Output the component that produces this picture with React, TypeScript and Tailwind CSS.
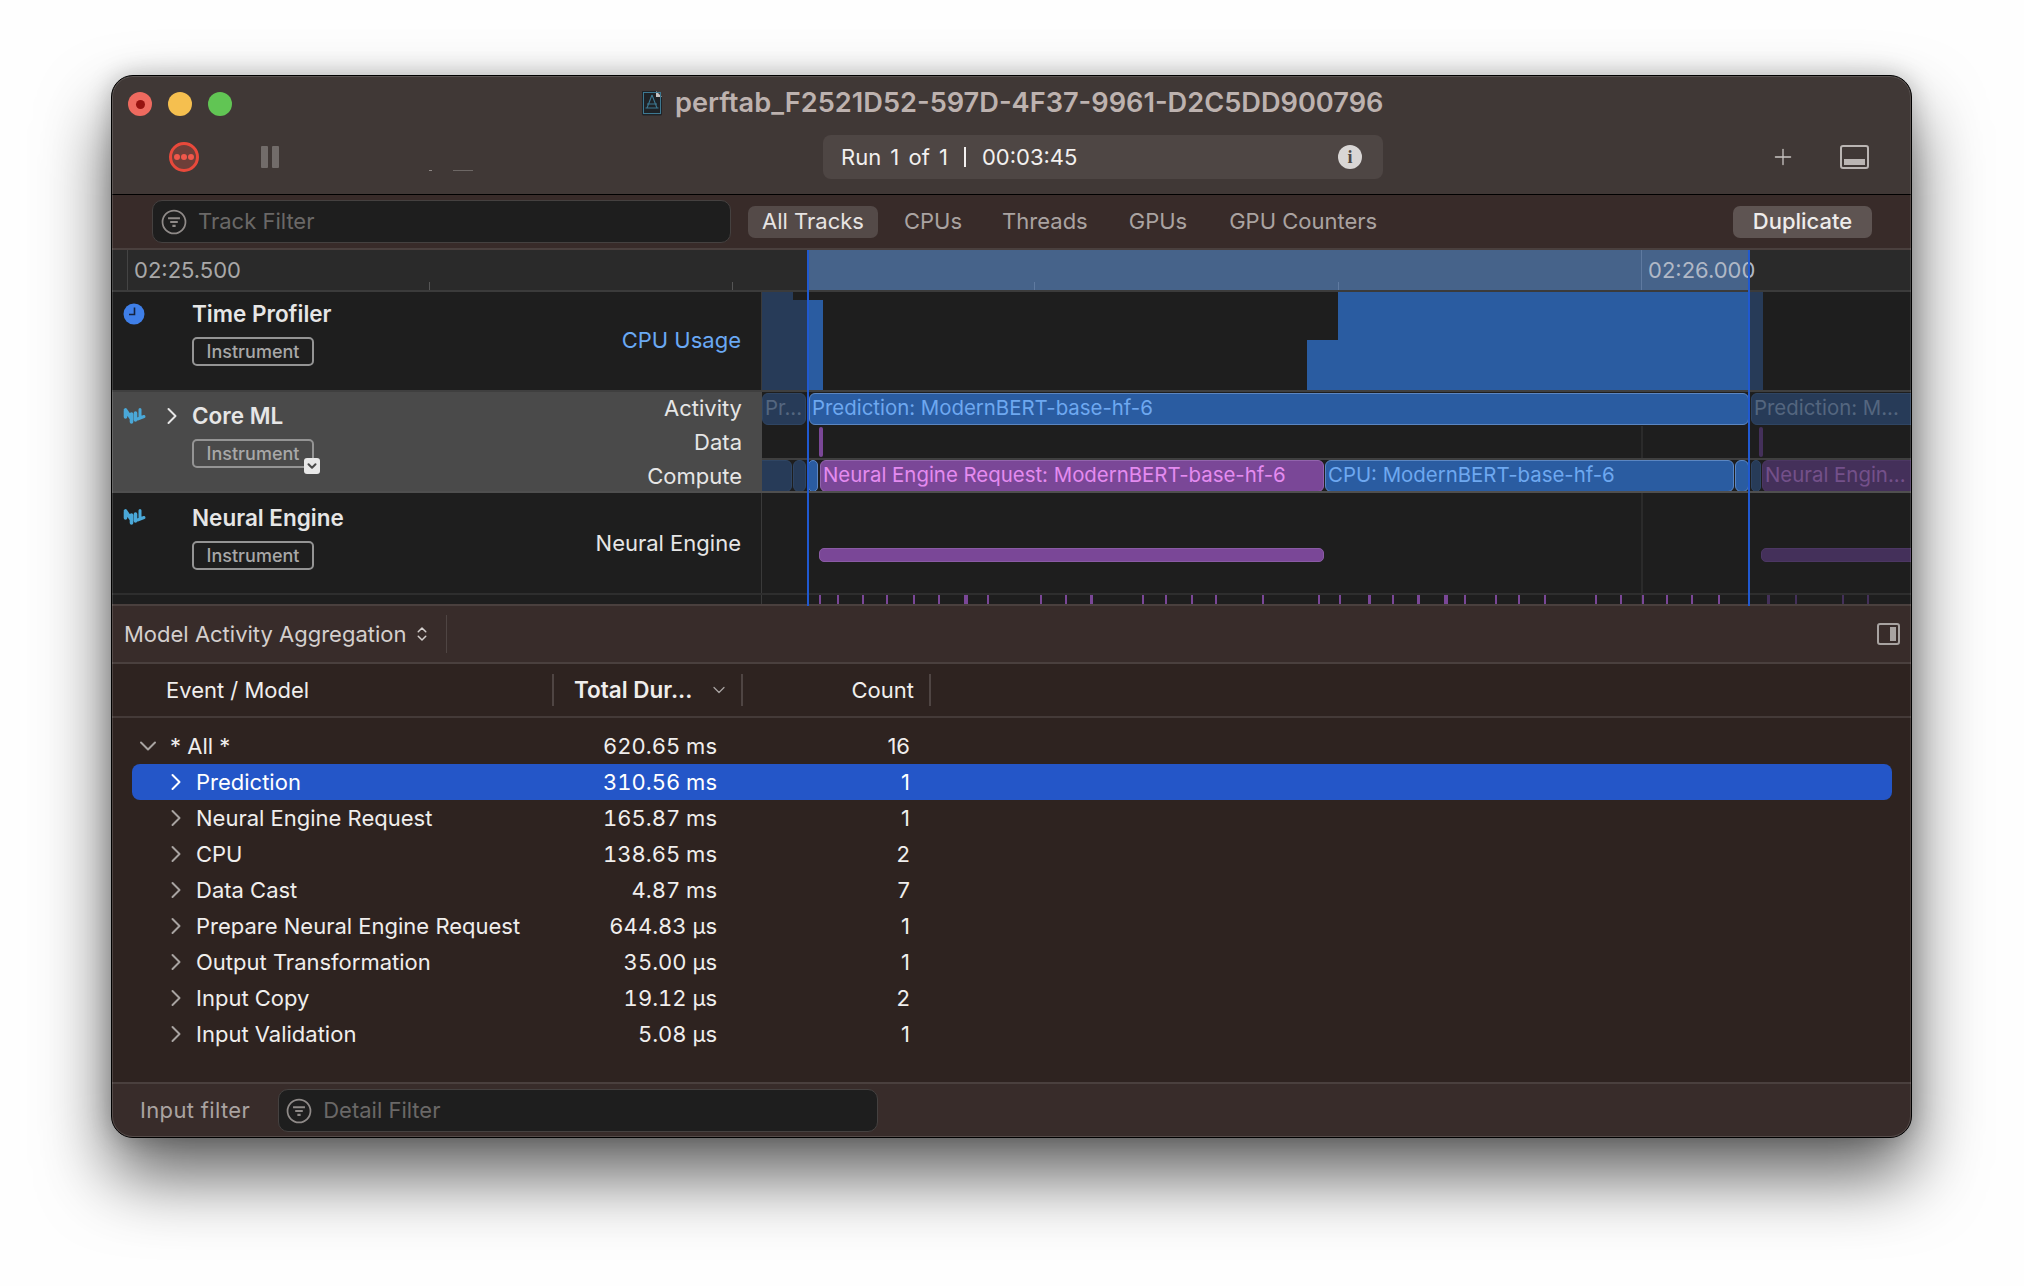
import { ChevronDown, ChevronsUpDown, Plus } from 'lucide-react'

const canvasLeft = 762

type Bar = { x1: number; x2: number; label?: string; tone: 'blue' | 'blueDim' | 'purple' | 'purpleDim' }

const toneClass = {
  blue: 'bg-[#2a5ca1] border-[#5b86c2] text-[#6ea8f0]',
  blueDim: 'bg-[#273b58] border-[#2f4563] text-[#54667f]',
  purple: 'bg-[#7a4797] border-[#9263ad] text-[#e48bf0]',
  purpleDim: 'bg-[#44305a] border-[#4c3763] text-[#74508a]',
}

const activityBars: Bar[] = [
  { x1: 762, x2: 806, label: 'Pr...', tone: 'blueDim' },
  { x1: 809, x2: 1749, label: 'Prediction: ModernBERT-base-hf-6', tone: 'blue' },
  { x1: 1751, x2: 1925, label: 'Prediction: M...', tone: 'blueDim' },
]

const computeBars: Bar[] = [
  { x1: 750, x2: 792, tone: 'blueDim' },
  { x1: 793, x2: 806, tone: 'blueDim' },
  { x1: 808, x2: 818, tone: 'blue' },
  { x1: 820, x2: 1324, label: 'Neural Engine Request: ModernBERT-base-hf-6', tone: 'purple' },
  { x1: 1325, x2: 1734, label: 'CPU: ModernBERT-base-hf-6', tone: 'blue' },
  { x1: 1735, x2: 1749, tone: 'blue' },
  { x1: 1751, x2: 1761, tone: 'blueDim' },
  { x1: 1762, x2: 1925, label: 'Neural Engin...', tone: 'purpleDim' },
]

// [x, width] of the small marks under the Neural Engine track
const ticks: [number, number][] = [
  [819, 2], [837, 2], [862, 2], [886, 2], [913, 2], [938, 2], [964, 4], [987, 2], [1040, 2], [1065, 2], [1090, 3],
  [1142, 2], [1165, 2], [1191, 2], [1215, 2], [1262, 2], [1318, 2], [1339, 2], [1368, 3], [1392, 2], [1417, 3],
  [1444, 4], [1464, 2], [1495, 2], [1518, 2], [1544, 2], [1595, 2], [1620, 2], [1642, 2], [1666, 2], [1691, 2], [1718, 2],
]
const dimTicks: [number, number][] = [[1767, 3], [1795, 2], [1842, 2], [1867, 2]]

const rows = [
  { name: 'Prediction', dur: '310.56 ms', count: '1', selected: true },
  { name: 'Neural Engine Request', dur: '165.87 ms', count: '1' },
  { name: 'CPU', dur: '138.65 ms', count: '2' },
  { name: 'Data Cast', dur: '4.87 ms', count: '7' },
  { name: 'Prepare Neural Engine Request', dur: '644.83 µs', count: '1' },
  { name: 'Output Transformation', dur: '35.00 µs', count: '1' },
  { name: 'Input Copy', dur: '19.12 µs', count: '2' },
  { name: 'Input Validation', dur: '5.08 µs', count: '1' },
]

function FilterIcon({ size = 24 }: { size?: number }) {
  return (
    <svg width={size} height={size} viewBox="0 0 24 24" fill="none" stroke="#8f8a88" strokeWidth="1.6" className="shrink-0">
      <circle cx="12" cy="12" r="10.6" />
      <path d="M6.5 8.5h11M8.5 12h7M10.5 15.5h3" strokeWidth="2" />
    </svg>
  )
}

function MlIcon() {
  return (
    <svg width="23" height="18" viewBox="0 0 23 18" fill="none" stroke="#4aa8d8" strokeWidth="3.6" strokeLinecap="round" strokeLinejoin="round">
      <path d="M2.5 3v7M2.5 3l5.5 8M8.5 7v8M12.5 6v7" />
      <path d="M17 2.5v8M14.5 12l6.5-2.5" strokeWidth="3" />
    </svg>
  )
}

function ClockIcon() {
  return (
    <svg width="22" height="22" viewBox="0 0 22 22">
      <circle cx="11" cy="11" r="10.5" fill="#3f7fe8" />
      <path d="M11.5 4.5v7H6" fill="none" stroke="#14233f" strokeWidth="1.6" />
    </svg>
  )
}

function DocIcon() {
  return (
    <svg width="24" height="28" viewBox="0 0 24 28" className="shrink-0">
      <path d="M2 2h14l6 6v17a1.5 1.5 0 0 1-1.5 1.5h-17A1.5 1.5 0 0 1 2 25z" fill="#1f2327" />
      <path d="M16 2l6 6h-6z" fill="#c9c4c2" />
      <rect x="3.5" y="3.5" width="17" height="21" fill="none" stroke="#3d7891" strokeWidth="1" />
      <path d="M12 6l-5 13M12 6l5 13M7 15h10M5.5 19h13" fill="none" stroke="#3d7891" strokeWidth="1.1" />
    </svg>
  )
}

function TallChevron({ className }: { className?: string }) {
  return (
    <svg width="12" height="18" viewBox="0 0 12 18" fill="none" stroke="currentColor" strokeWidth="2" strokeLinecap="round" strokeLinejoin="round" className={className}>
      <path d="M2.5 2l7 7-7 7" />
    </svg>
  )
}

function WideChevron({ className }: { className?: string }) {
  return (
    <svg width="18" height="12" viewBox="0 0 18 12" fill="none" stroke="currentColor" strokeWidth="2" strokeLinecap="round" strokeLinejoin="round" className={className}>
      <path d="M2 2.5l7 7 7-7" />
    </svg>
  )
}

function Badge() {
  return (
    <span className="flex h-[29px] w-[122px] items-center justify-center rounded-[5px] border-2 border-[#949494] text-[18px] font-medium text-[#a8a8a8]">
      Instrument
    </span>
  )
}

function TimelineBar({ bar }: { bar: Bar }) {
  return (
    <div
      className={`absolute inset-y-0 overflow-hidden whitespace-nowrap rounded-[6px] border pl-[2px] text-[20.4px] leading-[27px] ${toneClass[bar.tone]}`}
      style={{ left: bar.x1 - canvasLeft, width: bar.x2 - bar.x1 }}
    >
      {bar.label}
    </div>
  )
}

function GridLine() {
  return <div className="absolute inset-y-0 left-[879px] w-[2px] bg-[#2b2b2b]" />
}

export default function App() {
  return (
    <div className="h-[1286px] w-[2024px] overflow-hidden bg-[#fefefe] pl-[111px] pt-[75px] font-['Inter',sans-serif]">
      <div className="relative flex h-[1063px] w-[1801px] flex-col overflow-hidden rounded-[22px] border border-black bg-[#403836] shadow-[0_38px_70px_rgba(0,0,0,0.62),0_0_24px_rgba(0,0,0,0.22)]">
        {/* Title + toolbar */}
        <div className="relative h-[119px] shrink-0 border-b border-black">
          <div className="flex h-[56px] items-center pl-[16px]">
            <div className="flex gap-[16px]">
              <span className="flex h-6 w-6 items-center justify-center rounded-full bg-[#ee6a5f]">
                <span className="h-[9px] w-[9px] rounded-full bg-[#971310]" />
              </span>
              <span className="h-6 w-6 rounded-full bg-[#f5bf4f]" />
              <span className="h-6 w-6 rounded-full bg-[#61c554]" />
            </div>
            <div className="-mt-[1px] ml-[408px] flex items-center gap-[11px]">
              <DocIcon />
              <span className="text-[27.2px] font-semibold text-[#bdb2af]">perftab_F2521D52-597D-4F37-9961-D2C5DD900796</span>
            </div>
          </div>
          <div className="mt-[3px] flex h-[44px] items-center">
            <div className="ml-[57px] flex h-[30px] w-[30px] items-center justify-center rounded-full border-[3px] border-[#e9493b] bg-[#6e3f39]">
              <span className="flex gap-[1px]">
                <span className="h-[6px] w-[6px] rounded-full bg-[#f0584b]" />
                <span className="h-[6px] w-[6px] rounded-full bg-[#f0584b]" />
                <span className="h-[6px] w-[6px] rounded-full bg-[#f0584b]" />
              </span>
            </div>
            <div className="ml-[62px] flex gap-[4px]">
              <span className="h-[22px] w-[7px] rounded-[1px] bg-[#726c6a]" />
              <span className="h-[22px] w-[7px] rounded-[1px] bg-[#726c6a]" />
            </div>
            <div className="ml-[150px] mt-[26px] flex items-center gap-[21px]">
              <span className="h-[1px] w-[3px] bg-[#8c8684]" />
              <span className="h-[1px] w-[20px] bg-[#6d6765]" />
            </div>
            <div className="ml-[350px] flex h-[44px] w-[560px] items-center justify-between rounded-[8px] bg-[#4e4644] pl-[18px] pr-[21px]">
              <span className="flex items-center gap-[16px] whitespace-nowrap text-[22px] text-[#f2f0ef]">
                <span className="[word-spacing:3px]">Run 1 of 1</span>
                <span className="h-[20px] w-[2px] bg-[#f2f0ef]" />
                <span>00:03:45</span>
              </span>
              <span className="flex h-6 w-6 items-center justify-center rounded-full bg-[#d9d6d5] font-['Liberation_Serif',serif] text-[18px] font-bold text-[#4e4644]">i</span>
            </div>
            <Plus className="ml-[387px] h-[26px] w-[26px] text-[#c9c5c3]" strokeWidth={1.2} />
            <div className="ml-[44px] flex h-[24px] w-[29px] items-end rounded-[3px] border-2 border-[#bab5b3] p-[2px]">
              <span className="h-[6px] w-full bg-[#bab5b3]" />
            </div>
          </div>
        </div>

        {/* Track filter bar */}
        <div className="flex h-[55px] shrink-0 items-center border-b-2 border-[#4a403e] bg-[#382b29] text-[22px]">
          <div className="ml-[40px] flex h-[43px] w-[579px] items-center gap-[11px] rounded-[10px] border border-[#454140] bg-[#1e1e1e] pl-[8px]">
            <FilterIcon size={26} />
            <span className="text-[#6a6867]">Track Filter</span>
          </div>
          <span className="ml-[17px] flex h-[32px] w-[130px] items-center justify-center rounded-[7px] bg-[#544a48] text-[#e7e4e3]">All Tracks</span>
          <span className="ml-[26px] text-[#aaa3a1]">CPUs</span>
          <span className="ml-[40px] text-[#aaa3a1]">Threads</span>
          <span className="ml-[41px] text-[#aaa3a1]">GPUs</span>
          <span className="ml-[42px] text-[#aaa3a1]">GPU Counters</span>
          <span className="ml-auto mr-[39px] flex h-[32px] w-[139px] items-center justify-center rounded-[7px] bg-[#5e5452] font-medium text-[#eeeceb]">Duplicate</span>
        </div>

        {/* Ruler + tracks */}
        <div className="relative shrink-0">
          <div className="relative h-[42px] overflow-hidden border-b-2 border-[#3b3b3b] bg-[#2a2a2a] text-[22px]">
            <div className="absolute inset-y-0 left-[695px] w-[942px] bg-[#46638a]" />
            <div className="absolute inset-y-0 left-[15px] w-[1px] bg-[#444]" />
            <span className="absolute left-[22px] top-[4px] text-[#a8a8a8]">02:25.500</span>
            <span className="absolute left-[1536px] top-[4px] text-[#b0b8c6]">02:26.000</span>
            <div className="absolute inset-y-0 left-[1529px] w-[1px] bg-[#5f7aa0]" />
            <div className="absolute bottom-0 left-[317px] h-[8px] w-[1px] bg-[#555]" />
            <div className="absolute bottom-0 left-[620px] h-[8px] w-[1px] bg-[#555]" />
            <div className="absolute bottom-0 left-[922px] h-[8px] w-[1px] bg-[#5f7aa0]" />
            <div className="absolute bottom-0 left-[1226px] h-[8px] w-[1px] bg-[#5f7aa0]" />
          </div>

          {/* Time Profiler */}
          <div className="flex h-[100px] border-b-2 border-[#3f3f3f] bg-[#1e1e1e]">
            <div className="flex w-[650px] shrink-0 border-r border-[#3a3a3a]">
              <div className="ml-[11px] mt-[11px] w-[69px] shrink-0"><ClockIcon /></div>
              <div className="flex flex-col gap-[10px] pt-[9px]">
                <span className="text-[22.5px] font-semibold leading-[26px] text-[#e6e6e6]">Time Profiler</span>
                <Badge />
              </div>
              <span className="ml-auto mr-[20px] mt-[35px] text-[22px] leading-[26px] text-[#6aa9f4]">CPU Usage</span>
            </div>
            <div className="relative flex-1">
              <div className="absolute inset-y-0 left-0 w-[45px] bg-[#273b58]" />
              <div className="absolute inset-y-0 left-[31px] top-0 h-[8px] w-[14px] bg-[#1e1e1e]" />
              <div className="absolute bottom-0 left-[45px] top-[8px] w-[16px] bg-[#2a5ca1]" />
              <div className="absolute bottom-0 left-[545px] top-[48px] w-[31px] bg-[#2a5ca1]" />
              <div className="absolute inset-y-0 left-[576px] w-[412px] bg-[#2a5ca1]" />
              <div className="absolute inset-y-0 left-[988px] w-[13px] bg-[#273b58]" />
            </div>
          </div>

          {/* Core ML */}
          <div className="flex h-[101px] border-b-2 border-[#4f4f4f] bg-[#1e1e1e]">
            <div className="flex w-[650px] shrink-0 bg-[#4a4a4a]">
              <div className="ml-[11px] mt-[15px] w-[39px] shrink-0"><MlIcon /></div>
              <TallChevron className="ml-[4px] mt-[15px] text-[#e6e6e6]" />
              <div className="relative ml-[14px] flex flex-col gap-[10px] pt-[11px]">
                <span className="text-[22.5px] font-semibold leading-[26px] text-[#e6e6e6]">Core ML</span>
                <Badge />
                <span className="absolute left-[112px] top-[66px] flex h-[16px] w-[16px] items-center justify-center rounded-[3px] bg-[#e8e8e8]">
                  <ChevronDown className="h-[14px] w-[14px] text-[#4a4a4a]" strokeWidth={3.5} />
                </span>
              </div>
              <div className="-mt-[1px] ml-auto mr-[20px] flex flex-col items-end text-[22px] leading-[34px] text-[#e6e6e6]">
                <span>Activity</span>
                <span>Data</span>
                <span>Compute</span>
              </div>
            </div>
            <div className="flex flex-1 flex-col overflow-hidden">
              <div className="relative my-[1px] h-[32px] shrink-0">
                {activityBars.map((b) => <TimelineBar key={b.x1} bar={b} />)}
              </div>
              <div className="relative h-[34px] shrink-0 border-b-2 border-[#3f3f3f]">
                <GridLine />
                <div className="absolute inset-y-[1px] left-[57px] w-[4px] rounded-[2px] bg-[#7a4797]" />
                <div className="absolute inset-y-[1px] left-[997px] w-[4px] rounded-[2px] bg-[#44305a]" />
              </div>
              <div className="relative h-[32px] shrink-0">
                {computeBars.map((b) => <TimelineBar key={b.x1} bar={b} />)}
              </div>
            </div>
          </div>

          {/* Neural Engine */}
          <div className="flex h-[102px] border-b-2 border-[#2e2e2e] bg-[#1e1e1e]">
            <div className="flex w-[650px] shrink-0 border-r border-[#3a3a3a]">
              <div className="ml-[11px] mt-[15px] w-[69px] shrink-0"><MlIcon /></div>
              <div className="flex flex-col gap-[10px] pt-[12px]">
                <span className="text-[22.5px] font-semibold leading-[26px] text-[#e6e6e6]">Neural Engine</span>
                <Badge />
              </div>
              <span className="ml-auto mr-[20px] mt-[37px] text-[22px] leading-[26px] text-[#e6e6e6]">Neural Engine</span>
            </div>
            <div className="relative flex-1">
              <GridLine />
              <div className="absolute left-[57px] top-[55px] h-[14px] w-[505px] rounded-[5px] border border-[#8a5ba5] bg-[#7a4797]" />
              <div className="absolute left-[999px] top-[55px] h-[14px] w-[170px] rounded-[5px] border border-[#4c3763] bg-[#44305a]" />
            </div>
          </div>

          {/* Tick strip */}
          <div className="flex h-[11px] border-b-2 border-[#4a403e] bg-[#1e1e1e]">
            <div className="w-[650px] shrink-0 border-r border-[#3a3a3a]" />
            <div className="relative flex-1">
              <GridLine />
              {ticks.map(([x, w]) => (
                <div key={x} className="absolute inset-y-0 bg-[#7a4797]" style={{ left: x - canvasLeft, width: w }} />
              ))}
              {dimTicks.map(([x, w]) => (
                <div key={x} className="absolute inset-y-0 bg-[#44305a]" style={{ left: x - canvasLeft, width: w }} />
              ))}
            </div>
          </div>

          {/* Inspection range edges */}
          <div className="absolute inset-y-0 left-[695px] w-[2px] bg-[#2059d0]" />
          <div className="absolute inset-y-0 left-[1636px] w-[2px] bg-[#2059d0]" />
        </div>

        {/* Detail header */}
        <div className="flex h-[58px] shrink-0 items-center border-b-2 border-[#4a403e] bg-[#382c2a]">
          <span className="ml-[12px] text-[22px] text-[#d4cfcd]">Model Activity Aggregation</span>
          <ChevronsUpDown className="ml-[6px] h-[18px] w-[18px] text-[#d4cfcd]" strokeWidth={2} />
          <span className="ml-[15px] h-[38px] w-[1px] bg-[#4f4543]" />
          <div className="ml-auto mr-[11px] flex h-[22px] w-[23px] justify-end rounded-[3px] border-2 border-[#a8a3a1] p-[2px]">
            <span className="h-full w-[6px] bg-[#a8a3a1]" />
          </div>
        </div>

        {/* Table header */}
        <div className="flex h-[54px] shrink-0 items-center border-b-2 border-[#443a38] bg-[#2e2320] text-[22px] text-[#f0eeed]">
          <div className="flex h-[32px] w-[442px] items-center border-r-2 border-[#4f4543] pl-[54px]">Event / Model</div>
          <div className="flex h-[32px] w-[189px] items-center border-r-2 border-[#4f4543] pl-[20px] text-[22.5px] font-semibold">
            <span className="whitespace-nowrap">Total Dur...</span>
            <ChevronDown className="ml-[17px] h-[20px] w-[20px] text-[#a8a3a1]" strokeWidth={1.5} />
          </div>
          <div className="flex h-[32px] w-[188px] items-center justify-end border-r-2 border-[#4f4543] pr-[15px]">Count</div>
        </div>

        {/* Table body */}
        <div className="flex-1 bg-[#2e2320] pt-[10px] text-[22px] text-[#f0eeed]">
          <div className="ml-[20px] mr-[19px] grid h-[36px] grid-cols-[38px_264px_283px_193px] items-center">
            <WideChevron className="ml-[7px] text-[#a8a3a1]" />
            <span>* All *</span>
            <span className="text-right tabular-nums">620.65 ms</span>
            <span className="text-right">16</span>
          </div>
          {rows.map((row) => (
            <div
              key={row.name}
              className={`ml-[20px] mr-[19px] grid h-[36px] grid-cols-[64px_270px_251px_193px] items-center rounded-[8px] ${row.selected ? 'bg-[#2456c8] text-white' : ''}`}
            >
              <TallChevron className={`ml-[38px] ${row.selected ? 'text-white' : 'text-[#a8a3a1]'}`} />
              <span className="whitespace-nowrap">{row.name}</span>
              <span className="text-right tabular-nums">{row.dur}</span>
              <span className="text-right">{row.count}</span>
            </div>
          ))}
        </div>

        {/* Footer */}
        <div className="flex h-[55px] shrink-0 items-center border-t-2 border-[#4a403e] bg-[#382c2a] text-[22px]">
          <span className="ml-[28px] tracking-[0.35px] text-[#aaa3a1]">Input filter</span>
          <div className="ml-[28px] flex h-[43px] w-[600px] items-center gap-[11px] rounded-[10px] border border-[#454140] bg-[#1e1e1e] pl-[7px]">
            <FilterIcon size={26} />
            <span className="text-[#6a6867]">Detail Filter</span>
          </div>
        </div>

        {/* Window edge highlight */}
        <div className="pointer-events-none absolute inset-0 rounded-[21px] border border-white/15" />
      </div>
    </div>
  )
}
